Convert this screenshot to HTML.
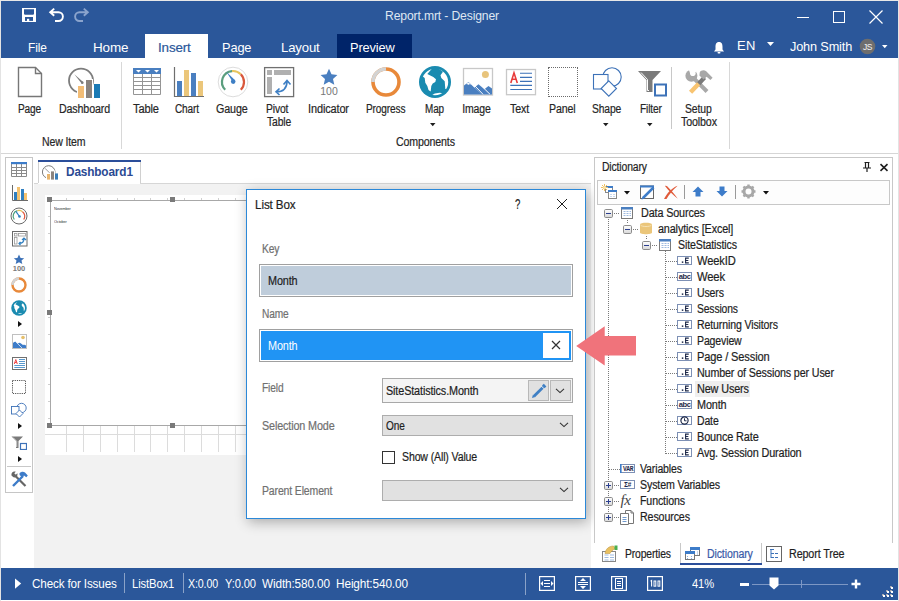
<!DOCTYPE html>
<html><head><meta charset="utf-8"><style>
html,body{margin:0;padding:0;width:899px;height:601px;overflow:hidden;background:#fff;font-family:"Liberation Sans", sans-serif;}
</style></head><body><div style="position:relative;width:899px;height:601px;overflow:hidden">
<div style="position:absolute;left:0px;top:0px;width:899px;height:601px;background:#ffffff"></div>
<div style="position:absolute;left:1px;top:1px;width:897px;height:57px;background:#2b579a"></div>
<div style="position:absolute;left:0px;top:0px;width:1px;height:601px;background:#e3e3e3"></div>
<div style="position:absolute;left:898px;top:0px;width:1px;height:601px;background:#e3e3e3"></div>
<div style="position:absolute;left:0px;top:0px;width:899px;height:1px;background:#e8e8e8"></div>
<svg style="position:absolute;left:22px;top:8px;" width="14" height="14" viewBox="0 0 14 14"><rect x="0" y="0" width="14" height="14" fill="#fff"/><path d="M2 1.2 H12 V6 L11.2 6.8 H2.8 L2 6Z" fill="#2b579a"/><rect x="3" y="9" width="8" height="3.9" fill="#2b579a"/><rect x="5" y="10.8" width="2.2" height="2.2" fill="#fff"/></svg>
<svg style="position:absolute;left:48px;top:7px;" width="17" height="16" viewBox="0 0 17 16"><path d="M6.2 1.6 L2.2 5.2 L6.2 8.8 M2.5 5.2 H10.5 A4.4 4.4 0 0 1 10.5 14 H7" fill="none" stroke="#fff" stroke-width="1.9"/></svg>
<svg style="position:absolute;left:73px;top:7px;" width="17" height="16" viewBox="0 0 17 16"><path d="M10.8 1.6 L14.8 5.2 L10.8 8.8 M14.5 5.2 H6.5 A4.4 4.4 0 0 0 6.5 14 H10" fill="none" stroke="#8ba4cd" stroke-width="1.9"/></svg>
<div style="position:absolute;left:385.00px;top:9.98px;font-size:12.5px;line-height:1;white-space:nowrap;color:#dfe7f3;font-weight:400;letter-spacing:-0.150px;-webkit-text-stroke:0;transform:scaleX(0.9741);transform-origin:1.00px 50%;">Report.mrt - Designer</div>
<div style="position:absolute;left:797px;top:17px;width:12px;height:1px;background:#fff"></div>
<div style="position:absolute;left:833px;top:11px;width:12px;height:12px;border:1px solid #fff;box-sizing:border-box"></div>
<svg style="position:absolute;left:869px;top:10px;" width="14" height="14" viewBox="0 0 14 14"><path d="M0.5 0.5 L13.5 13.5 M13.5 0.5 L0.5 13.5" stroke="#fff" stroke-width="1.2"/></svg>
<div style="position:absolute;left:145px;top:34px;width:63px;height:24px;background:#fff"></div>
<div style="position:absolute;left:337px;top:34px;width:75px;height:24px;background:#002469"></div>
<div style="position:absolute;left:28.00px;top:40.52px;font-size:13.5px;line-height:1;white-space:nowrap;color:#fff;font-weight:400;letter-spacing:-0.150px;-webkit-text-stroke:0;transform:scaleX(0.8841);transform-origin:1.00px 50%;">File</div>
<div style="position:absolute;left:92.50px;top:40.52px;font-size:13.5px;line-height:1;white-space:nowrap;color:#fff;font-weight:400;letter-spacing:-0.150px;-webkit-text-stroke:0;transform:scaleX(0.9984);transform-origin:1.00px 50%;">Home</div>
<div style="position:absolute;left:158.00px;top:40.52px;font-size:13.5px;line-height:1;white-space:nowrap;color:#2b579a;font-weight:400;letter-spacing:-0.150px;-webkit-text-stroke:0.2px #2b579a;transform:scaleX(0.9919);transform-origin:1.00px 50%;">Insert</div>
<div style="position:absolute;left:221.50px;top:40.52px;font-size:13.5px;line-height:1;white-space:nowrap;color:#fff;font-weight:400;letter-spacing:-0.150px;-webkit-text-stroke:0;transform:scaleX(0.9469);transform-origin:1.00px 50%;">Page</div>
<div style="position:absolute;left:281.00px;top:40.52px;font-size:13.5px;line-height:1;white-space:nowrap;color:#fff;font-weight:400;letter-spacing:-0.150px;-webkit-text-stroke:0;transform:scaleX(0.9736);transform-origin:1.00px 50%;">Layout</div>
<div style="position:absolute;left:350.00px;top:40.52px;font-size:13.5px;line-height:1;white-space:nowrap;color:#fff;font-weight:400;letter-spacing:-0.150px;-webkit-text-stroke:0;transform:scaleX(0.9490);transform-origin:1.00px 50%;">Preview</div>
<svg style="position:absolute;left:713px;top:41px;" width="12" height="13" viewBox="0 0 12 13"><path d="M6 1 C3 1 2.5 3.5 2.5 6 L2.5 8.5 L1 10.5 H11 L9.5 8.5 L9.5 6 C9.5 3.5 9 1 6 1Z" fill="#fff"/><rect x="4.5" y="11" width="3" height="1.6" rx="0.8" fill="#fff"/></svg>
<div style="position:absolute;left:737.00px;top:39.45px;font-size:13px;line-height:1;white-space:nowrap;color:#fff;font-weight:400;letter-spacing:0.329px;-webkit-text-stroke:0;">EN</div>
<svg style="position:absolute;left:767px;top:42px;" width="7" height="4" viewBox="0 0 7 4"><path d="M0 0 H7 L3.5 4Z" fill="#fff"/></svg>
<div style="position:absolute;left:790.00px;top:40.45px;font-size:13px;line-height:1;white-space:nowrap;color:#fff;font-weight:400;letter-spacing:-0.150px;-webkit-text-stroke:0;transform:scaleX(0.9771);transform-origin:0.00px 50%;">John Smith</div>
<svg style="position:absolute;left:859px;top:38px;" width="17" height="17" viewBox="0 0 17 17"><circle cx="8.5" cy="8.5" r="7.8" fill="#6e6e6e"/><text x="8.5" y="11.6" font-size="8.5" font-family="Liberation Sans" fill="#f4f4f4" text-anchor="middle" letter-spacing="-0.4">JS</text></svg>
<svg style="position:absolute;left:882px;top:45px;" width="6" height="4" viewBox="0 0 6 4"><path d="M0 0 H5.5 L2.75 3.2Z" fill="#fff"/></svg>
<div style="position:absolute;left:1px;top:153px;width:897px;height:1px;background:#d6d6d6"></div>
<div style="position:absolute;left:121px;top:62px;width:1px;height:87px;background:#d8d8d8"></div>
<div style="position:absolute;left:729px;top:62px;width:1px;height:87px;background:#d8d8d8"></div>
<div style="position:absolute;left:671px;top:67px;width:1px;height:62px;background:#c8c8c8"></div>
<div style="position:absolute;left:17.50px;top:102.80px;font-size:12px;line-height:1;white-space:nowrap;color:#262626;font-weight:400;letter-spacing:-0.150px;-webkit-text-stroke:0.2px #262626;transform:scaleX(0.8422);transform-origin:0.00px 50%;">Page</div>
<div style="position:absolute;left:58.50px;top:102.80px;font-size:12px;line-height:1;white-space:nowrap;color:#262626;font-weight:400;letter-spacing:-0.150px;-webkit-text-stroke:0.2px #262626;transform:scaleX(0.8886);transform-origin:0.00px 50%;">Dashboard</div>
<div style="position:absolute;left:41.50px;top:135.80px;font-size:12px;line-height:1;white-space:nowrap;color:#262626;font-weight:400;letter-spacing:-0.150px;-webkit-text-stroke:0.2px #262626;transform:scaleX(0.8765);transform-origin:0.00px 50%;">New Item</div>
<div style="position:absolute;left:133.40px;top:102.80px;font-size:12px;line-height:1;white-space:nowrap;color:#262626;font-weight:400;letter-spacing:-0.150px;-webkit-text-stroke:0.2px #262626;transform:scaleX(0.9221);transform-origin:0.00px 50%;">Table</div>
<div style="position:absolute;left:175.40px;top:102.80px;font-size:12px;line-height:1;white-space:nowrap;color:#262626;font-weight:400;letter-spacing:-0.150px;-webkit-text-stroke:0.2px #262626;transform:scaleX(0.8365);transform-origin:0.00px 50%;">Chart</div>
<div style="position:absolute;left:216.00px;top:102.80px;font-size:12px;line-height:1;white-space:nowrap;color:#262626;font-weight:400;letter-spacing:-0.150px;-webkit-text-stroke:0.2px #262626;transform:scaleX(0.8950);transform-origin:0.00px 50%;">Gauge</div>
<div style="position:absolute;left:266.00px;top:102.80px;font-size:12px;line-height:1;white-space:nowrap;color:#262626;font-weight:400;letter-spacing:-0.150px;-webkit-text-stroke:0.2px #262626;transform:scaleX(0.8600);transform-origin:0.00px 50%;">Pivot</div>
<div style="position:absolute;left:266.60px;top:115.80px;font-size:12px;line-height:1;white-space:nowrap;color:#262626;font-weight:400;letter-spacing:-0.150px;-webkit-text-stroke:0.2px #262626;transform:scaleX(0.8587);transform-origin:0.00px 50%;">Table</div>
<div style="position:absolute;left:307.50px;top:102.80px;font-size:12px;line-height:1;white-space:nowrap;color:#262626;font-weight:400;letter-spacing:-0.150px;-webkit-text-stroke:0.2px #262626;transform:scaleX(0.9126);transform-origin:1.00px 50%;">Indicator</div>
<div style="position:absolute;left:365.50px;top:102.80px;font-size:12px;line-height:1;white-space:nowrap;color:#262626;font-weight:400;letter-spacing:-0.150px;-webkit-text-stroke:0.2px #262626;transform:scaleX(0.8410);transform-origin:0.00px 50%;">Progress</div>
<div style="position:absolute;left:424.50px;top:102.80px;font-size:12px;line-height:1;white-space:nowrap;color:#262626;font-weight:400;letter-spacing:-0.150px;-webkit-text-stroke:0.2px #262626;transform:scaleX(0.8258);transform-origin:0.00px 50%;">Map</div>
<div style="position:absolute;left:462.00px;top:102.80px;font-size:12px;line-height:1;white-space:nowrap;color:#262626;font-weight:400;letter-spacing:-0.150px;-webkit-text-stroke:0.2px #262626;transform:scaleX(0.8729);transform-origin:1.00px 50%;">Image</div>
<div style="position:absolute;left:510.30px;top:102.80px;font-size:12px;line-height:1;white-space:nowrap;color:#262626;font-weight:400;letter-spacing:-0.150px;-webkit-text-stroke:0.2px #262626;transform:scaleX(0.8864);transform-origin:0.00px 50%;">Text</div>
<div style="position:absolute;left:549.20px;top:102.80px;font-size:12px;line-height:1;white-space:nowrap;color:#262626;font-weight:400;letter-spacing:-0.150px;-webkit-text-stroke:0.2px #262626;transform:scaleX(0.8836);transform-origin:0.00px 50%;">Panel</div>
<div style="position:absolute;left:592.40px;top:102.80px;font-size:12px;line-height:1;white-space:nowrap;color:#262626;font-weight:400;letter-spacing:-0.150px;-webkit-text-stroke:0.2px #262626;transform:scaleX(0.8598);transform-origin:0.00px 50%;">Shape</div>
<div style="position:absolute;left:640.00px;top:102.80px;font-size:12px;line-height:1;white-space:nowrap;color:#262626;font-weight:400;letter-spacing:-0.150px;-webkit-text-stroke:0.2px #262626;transform:scaleX(0.8488);transform-origin:0.00px 50%;">Filter</div>
<div style="position:absolute;left:685.00px;top:102.80px;font-size:12px;line-height:1;white-space:nowrap;color:#262626;font-weight:400;letter-spacing:-0.150px;-webkit-text-stroke:0.2px #262626;transform:scaleX(0.8686);transform-origin:0.00px 50%;">Setup</div>
<div style="position:absolute;left:681.00px;top:115.80px;font-size:12px;line-height:1;white-space:nowrap;color:#262626;font-weight:400;letter-spacing:-0.150px;-webkit-text-stroke:0.2px #262626;transform:scaleX(0.8897);transform-origin:0.00px 50%;">Toolbox</div>
<div style="position:absolute;left:396.00px;top:135.80px;font-size:12px;line-height:1;white-space:nowrap;color:#262626;font-weight:400;letter-spacing:-0.150px;-webkit-text-stroke:0.2px #262626;transform:scaleX(0.8847);transform-origin:0.00px 50%;">Components</div>
<svg style="position:absolute;left:430px;top:123px;" width="6" height="4" viewBox="0 0 6 4"><path d="M0 0 H5.5 L2.75 3.2Z" fill="#1e1e1e"/></svg>
<svg style="position:absolute;left:603px;top:123px;" width="6" height="4" viewBox="0 0 6 4"><path d="M0 0 H5.5 L2.75 3.2Z" fill="#1e1e1e"/></svg>
<svg style="position:absolute;left:647px;top:123px;" width="6" height="4" viewBox="0 0 6 4"><path d="M0 0 H5.5 L2.75 3.2Z" fill="#1e1e1e"/></svg>
<svg style="position:absolute;left:17px;top:66px;" width="26" height="32" viewBox="0 0 26 32"><path d="M1.5 1.5 H18.5 L24.5 7.5 V30.5 H1.5 Z" fill="#fff" stroke="#777" stroke-width="1.4"/><path d="M18.5 1.5 V7.5 H24.5" fill="none" stroke="#777" stroke-width="1.4"/></svg>
<svg style="position:absolute;left:66px;top:66px;" width="36" height="34" viewBox="0 0 36 34"><circle cx="15" cy="14.6" r="12" fill="none" stroke="#7d7d7d" stroke-width="1.8"/><path d="M8.3 8.3 L17.2 16 L15.6 17.6Z" fill="#7d7d7d"/><circle cx="16.3" cy="16.7" r="1.3" fill="#7d7d7d"/><rect x="11" y="19" width="8" height="14" fill="#fff"/><rect x="12" y="20" width="6" height="12" fill="#f3bd76"/><rect x="19" y="13" width="8" height="20" fill="#fff"/><rect x="20" y="14" width="6" height="18" fill="#8a837e"/><rect x="28" y="18" width="6" height="14" fill="#1b7ab5"/></svg>
<svg style="position:absolute;left:132px;top:67px;" width="30" height="29" viewBox="0 0 30 29"><rect x="1" y="1" width="28" height="6" fill="#4a7fc0"/><path d="M4 3 H9 L6.5 5.5Z M13 3 H18 L15.5 5.5Z M22 3 H27 L24.5 5.5Z" fill="#fff"/><path d="M1.5 7 V27.5 H28.5 V7 M1.5 10.5 H28.5 M1.5 14.5 H28.5 M1.5 18.5 H28.5 M1.5 22.5 H28.5 M10.5 7 V27.5 M19.5 7 V27.5" fill="none" stroke="#959595" stroke-width="1"/></svg>
<svg style="position:absolute;left:173px;top:66px;" width="32" height="32" viewBox="0 0 32 32"><path d="M1.5 1 V30.5 H31" fill="none" stroke="#6e6e6e" stroke-width="1.2"/><rect x="4" y="15" width="5" height="15" fill="#4a7fc0"/><rect x="11" y="4" width="5" height="26" fill="#ebc67a"/><rect x="18" y="7" width="5" height="23" fill="#4a7fc0"/><rect x="25" y="15" width="5" height="15" fill="#ebc67a"/></svg>
<svg style="position:absolute;left:217px;top:66px;" width="32" height="32" viewBox="0 0 32 32"><circle cx="16" cy="16" r="14.8" fill="none" stroke="#d8d8d8" stroke-width="0.9"/><path d="M8.22 23.78 A11 11 0 0 1 15.04 5.04" fill="none" stroke="#5b9e7e" stroke-width="2.2"/><path d="M15.04 5.04 A11 11 0 0 1 23.78 8.22" fill="none" stroke="#e8c55e" stroke-width="2.2"/><path d="M23.78 8.22 A11 11 0 0 1 23.78 23.78" fill="none" stroke="#d9583c" stroke-width="2.2"/><path d="M9.3 5.8 L15 14.8 L17.3 13.4Z" fill="#3e7fc4"/><circle cx="16.2" cy="15.6" r="2.3" fill="#3e7fc4"/></svg>
<svg style="position:absolute;left:263px;top:66px;" width="32" height="32" viewBox="0 0 32 32"><rect x="1.6" y="1.6" width="29" height="29" fill="#fff" stroke="#707070" stroke-width="1.3"/><rect x="4" y="4" width="5" height="5" fill="#b0b0b0"/><rect x="11" y="4" width="17" height="5" fill="#b0b0b0"/><rect x="4" y="11" width="5" height="17" fill="#b0b0b0"/><path d="M13 26 C19 26 24 24 24 15 M20.5 18.5 L24 14.5 L27.5 18.5 M16.5 22.5 L13 25.8 L16.5 29" fill="none" stroke="#3e7fc4" stroke-width="1.6"/></svg>
<svg style="position:absolute;left:318px;top:68px;" width="22" height="30" viewBox="0 0 22 30"><path d="M11 0.8 L13.5 6.3 L19.4 6.9 L15 10.9 L16.3 16.7 L11 13.7 L5.7 16.7 L7 10.9 L2.6 6.9 L8.5 6.3Z" fill="#4a7fc0"/><text x="11" y="27" font-size="10.5" font-family="Liberation Sans" fill="#777" text-anchor="middle">100</text></svg>
<svg style="position:absolute;left:370px;top:66px;" width="32" height="32" viewBox="0 0 32 32"><circle cx="16" cy="16" r="13" fill="none" stroke="#e8893a" stroke-width="3.6"/><path d="M3 16 A13 13 0 0 1 16 3" fill="none" stroke="#d3d3d3" stroke-width="3.6"/></svg>
<svg style="position:absolute;left:418px;top:65px;" width="34" height="34" viewBox="0 0 34 34"><defs><clipPath id="gc"><circle cx="17" cy="17" r="13.2"/></clipPath></defs><circle cx="17" cy="17" r="16" fill="#1a8bb0"/><g clip-path="url(#gc)" fill="#fff"><path d="M0 0 L15 0 L14.5 3 L9.3 9 L15.3 12 L18 14.3 L17.3 17 L14.7 18.5 L13.3 21 L12.7 26.5 L10.5 25 L9.3 21 L7.3 17.7 L6.7 13 L4.5 11.3 L0 11 Z"/><path d="M20.5 3.5 L25 6.8 L22.5 10.3 L23.3 13 L26.7 16.3 L27.3 24 L34 24 L34 0 L20.5 0 Z"/><path d="M12.5 31 Q18 26.8 25 28.2 L25 34 L12.5 34 Z"/></g></svg>
<svg style="position:absolute;left:462px;top:67px;" width="32" height="29" viewBox="0 0 32 29"><rect x="1.5" y="1.5" width="29" height="26.5" fill="#fff" stroke="#c8c8c8" stroke-width="1.3"/><circle cx="23.4" cy="7.5" r="3.5" fill="#e8c47c"/><path d="M2 27.5 V18.5 L6.5 15 L19.5 27.5Z" fill="#4a7fc0"/><path d="M12.5 20.5 L16.5 17.2 L28.5 27.5 H19Z" fill="#4a7fc0"/><path d="M22 22.5 L26.5 19 L30 21.5 V27.5 H27Z" fill="#4a7fc0"/><path d="M12.8 18.8 L21 27.3 M21.8 21.2 L28 27.3" stroke="#fff" stroke-width="1"/><path d="M4 17 L6.5 15.5 L9 17.5 L7.2 17.2 L6.3 18 L5.5 17.2Z" fill="#fff"/></svg>
<svg style="position:absolute;left:505px;top:68px;" width="32" height="28" viewBox="0 0 32 28"><rect x="1.5" y="1.5" width="29" height="25.2" fill="#fff" stroke="#c8c8c8" stroke-width="1.3"/><path d="M5.8 15 L9 4.8 L12.3 15 M6.8 11.2 H11.3" fill="none" stroke="#e83a3a" stroke-width="1.6"/><path d="M15 5.3 H27 M15 9.4 H27 M15 13.4 H27 M5.3 17.4 H27 M5.3 21.5 H27" stroke="#3d72b8" stroke-width="1.1"/></svg>
<div style="position:absolute;left:548px;top:67px;width:30px;height:30px;border:1px dotted #6a6a6a;box-sizing:border-box"></div>
<svg style="position:absolute;left:590px;top:65px;" width="34" height="34" viewBox="0 0 34 34"><circle cx="22" cy="12" r="9.2" fill="none" stroke="#3d72b8" stroke-width="1.1"/><rect x="3.5" y="9.5" width="14.5" height="14.5" fill="#fff" stroke="#3d72b8" stroke-width="1.1"/><path d="M18.8 15.8 L26.5 23.5 L18.8 31.2 L11.1 23.5Z" fill="#fff" stroke="#3d72b8" stroke-width="1.1"/></svg>
<svg style="position:absolute;left:637px;top:69px;" width="31" height="28" viewBox="0 0 31 28"><path d="M1 2 H24 L15.5 11 V23 H9.5 V11Z" fill="#7a7a7a"/><path d="M4 3.5 L10.5 10.5 V21.5 H12" fill="none" stroke="#fff" stroke-width="1"/><rect x="18" y="15.5" width="11" height="11" fill="#fff" stroke="#3d72b8" stroke-width="2"/></svg>
<svg style="position:absolute;left:682px;top:68px;" width="34" height="28" viewBox="0 0 34 28"><path d="M9.4 7.8 L25 23.5" stroke="#a8a8a8" stroke-width="4"/><circle cx="9.4" cy="7.8" r="6" fill="#a8a8a8"/><circle cx="10.8" cy="5.2" r="2.8" fill="#fff"/><path d="M8.2 -1 H14.5 V5 H8.2Z" fill="#fff" transform="rotate(-20 10.8 5)"/><path d="M22.5 9.5 L16.5 16" stroke="#7a7a7a" stroke-width="4.2"/><path d="M16.7 15.8 L8.6 24.3" stroke="#f8c471" stroke-width="4.4"/><path d="M17.8 4.2 C19 2.2 22 1.6 24.2 3.2 L30.6 9.8 L28.4 12 L24.6 8.8 L21.6 11.6 L17.4 7.6 Z" fill="#a8a8a8"/></svg>
<div style="position:absolute;left:1px;top:154px;width:33px;height:414px;background:#ffffff"></div>
<div style="position:absolute;left:34px;top:154px;width:557px;height:414px;background:#f2f2f2"></div>
<div style="position:absolute;left:34px;top:154px;width:557px;height:29px;background:#fff"></div>
<div style="position:absolute;left:591px;top:154px;width:307px;height:414px;background:#fff"></div>
<div style="position:absolute;left:5px;top:157px;width:28px;height:336px;border:1px solid #c6c6c6;box-sizing:border-box;background:#fff"></div>
<div style="position:absolute;left:38px;top:160px;width:103px;height:24px;background:#fff;border:1px solid #d0d0d0;border-bottom:none;box-sizing:border-box"></div>
<div style="position:absolute;left:38px;top:160px;width:103px;height:2px;background:#2b4e9a"></div>
<div style="position:absolute;left:34px;top:183px;width:557px;height:1px;background:#d6d6d6"></div>
<div style="position:absolute;left:38px;top:183px;width:102px;height:1px;background:#fff"></div>
<div style="position:absolute;left:66.00px;top:165.88px;font-size:12.5px;line-height:1;white-space:nowrap;color:#2b4a93;font-weight:700;letter-spacing:-0.150px;-webkit-text-stroke:0.2px #2b4a93;transform:scaleX(0.9445);transform-origin:0.00px 50%;-webkit-text-stroke:0">Dashboard1</div>
<svg style="position:absolute;left:42px;top:164px;" width="18" height="17" viewBox="0 0 18 17"><circle cx="6.7" cy="8" r="6.3" fill="none" stroke="#7d7d7d" stroke-width="1"/><path d="M3 4.3 L7.5 8.8" stroke="#7d7d7d" stroke-width="0.8"/><rect x="4" y="9" width="5" height="7" fill="#fff"/><rect x="5" y="10" width="3" height="5.6" fill="#e9b66e"/><rect x="8" y="6.4" width="5" height="10" fill="#fff"/><rect x="9" y="7.4" width="3" height="8.2" fill="#8a837e"/><rect x="13" y="9.4" width="3" height="6.2" fill="#3a7db8"/></svg>
<div style="position:absolute;left:45px;top:195px;width:535px;height:260px;background:#fff"></div>
<div style="position:absolute;left:50px;top:200px;width:530px;height:1px;background:#a8a8a8"></div>
<div style="position:absolute;left:50px;top:200px;width:1px;height:226px;background:#a8a8a8"></div>
<div style="position:absolute;left:50px;top:425px;width:530px;height:1px;background:#a8a8a8"></div>
<div style="position:absolute;left:47px;top:197px;width:5px;height:5px;background:#7a7a7a"></div>
<div style="position:absolute;left:170px;top:197px;width:5px;height:5px;background:#7a7a7a"></div>
<div style="position:absolute;left:47px;top:310px;width:5px;height:5px;background:#7a7a7a"></div>
<div style="position:absolute;left:47px;top:423px;width:5px;height:5px;background:#7a7a7a"></div>
<div style="position:absolute;left:170px;top:423px;width:5px;height:5px;background:#7a7a7a"></div>
<div style="position:absolute;left:45px;top:434px;width:535px;height:1px;background:#dcdcdc"></div>
<div style="position:absolute;left:66px;top:426px;width:1px;height:26px;background:#dcdcdc"></div>
<div style="position:absolute;left:83px;top:426px;width:1px;height:26px;background:#dcdcdc"></div>
<div style="position:absolute;left:100px;top:426px;width:1px;height:26px;background:#dcdcdc"></div>
<div style="position:absolute;left:117px;top:426px;width:1px;height:26px;background:#dcdcdc"></div>
<div style="position:absolute;left:134px;top:426px;width:1px;height:26px;background:#dcdcdc"></div>
<div style="position:absolute;left:150px;top:426px;width:1px;height:26px;background:#dcdcdc"></div>
<div style="position:absolute;left:167px;top:426px;width:1px;height:26px;background:#dcdcdc"></div>
<div style="position:absolute;left:184px;top:426px;width:1px;height:26px;background:#dcdcdc"></div>
<div style="position:absolute;left:201px;top:426px;width:1px;height:26px;background:#dcdcdc"></div>
<div style="position:absolute;left:218px;top:426px;width:1px;height:26px;background:#dcdcdc"></div>
<div style="position:absolute;left:235px;top:426px;width:1px;height:26px;background:#dcdcdc"></div>
<div style="position:absolute;left:251px;top:426px;width:1px;height:26px;background:#dcdcdc"></div>
<div style="position:absolute;left:268px;top:426px;width:1px;height:26px;background:#dcdcdc"></div>
<div style="position:absolute;left:285px;top:426px;width:1px;height:26px;background:#dcdcdc"></div>
<div style="position:absolute;left:54.00px;top:207.10px;font-size:4px;line-height:1;white-space:nowrap;color:#333;font-weight:400;letter-spacing:-0.150px;-webkit-text-stroke:0.2px #333;transform:scaleX(0.9685);transform-origin:0.00px 50%;-webkit-text-stroke:0">November</div>
<div style="position:absolute;left:54.00px;top:220.10px;font-size:4px;line-height:1;white-space:nowrap;color:#333;font-weight:400;letter-spacing:-0.150px;-webkit-text-stroke:0.2px #333;transform:scaleX(0.9645);transform-origin:0.00px 50%;-webkit-text-stroke:0">October</div>
<div style="position:absolute;left:66px;top:198px;width:1px;height:2px;background:#cfcfcf"></div>
<div style="position:absolute;left:83px;top:198px;width:1px;height:2px;background:#cfcfcf"></div>
<div style="position:absolute;left:100px;top:198px;width:1px;height:2px;background:#cfcfcf"></div>
<div style="position:absolute;left:117px;top:198px;width:1px;height:2px;background:#cfcfcf"></div>
<div style="position:absolute;left:134px;top:198px;width:1px;height:2px;background:#cfcfcf"></div>
<div style="position:absolute;left:150px;top:198px;width:1px;height:2px;background:#cfcfcf"></div>
<div style="position:absolute;left:167px;top:198px;width:1px;height:2px;background:#cfcfcf"></div>
<div style="position:absolute;left:184px;top:198px;width:1px;height:2px;background:#cfcfcf"></div>
<div style="position:absolute;left:201px;top:198px;width:1px;height:2px;background:#cfcfcf"></div>
<div style="position:absolute;left:218px;top:198px;width:1px;height:2px;background:#cfcfcf"></div>
<div style="position:absolute;left:235px;top:198px;width:1px;height:2px;background:#cfcfcf"></div>
<div style="position:absolute;left:251px;top:198px;width:1px;height:2px;background:#cfcfcf"></div>
<div style="position:absolute;left:268px;top:198px;width:1px;height:2px;background:#cfcfcf"></div>
<div style="position:absolute;left:285px;top:198px;width:1px;height:2px;background:#cfcfcf"></div>
<div style="position:absolute;left:302px;top:198px;width:1px;height:2px;background:#cfcfcf"></div>
<div style="position:absolute;left:319px;top:198px;width:1px;height:2px;background:#cfcfcf"></div>
<div style="position:absolute;left:336px;top:198px;width:1px;height:2px;background:#cfcfcf"></div>
<div style="position:absolute;left:352px;top:198px;width:1px;height:2px;background:#cfcfcf"></div>
<div style="position:absolute;left:369px;top:198px;width:1px;height:2px;background:#cfcfcf"></div>
<div style="position:absolute;left:386px;top:198px;width:1px;height:2px;background:#cfcfcf"></div>
<div style="position:absolute;left:403px;top:198px;width:1px;height:2px;background:#cfcfcf"></div>
<div style="position:absolute;left:48px;top:216px;width:2px;height:1px;background:#cfcfcf"></div>
<div style="position:absolute;left:48px;top:233px;width:2px;height:1px;background:#cfcfcf"></div>
<div style="position:absolute;left:48px;top:250px;width:2px;height:1px;background:#cfcfcf"></div>
<div style="position:absolute;left:48px;top:267px;width:2px;height:1px;background:#cfcfcf"></div>
<div style="position:absolute;left:48px;top:283px;width:2px;height:1px;background:#cfcfcf"></div>
<div style="position:absolute;left:48px;top:300px;width:2px;height:1px;background:#cfcfcf"></div>
<div style="position:absolute;left:48px;top:317px;width:2px;height:1px;background:#cfcfcf"></div>
<div style="position:absolute;left:48px;top:334px;width:2px;height:1px;background:#cfcfcf"></div>
<div style="position:absolute;left:48px;top:351px;width:2px;height:1px;background:#cfcfcf"></div>
<div style="position:absolute;left:48px;top:368px;width:2px;height:1px;background:#cfcfcf"></div>
<div style="position:absolute;left:48px;top:384px;width:2px;height:1px;background:#cfcfcf"></div>
<div style="position:absolute;left:48px;top:401px;width:2px;height:1px;background:#cfcfcf"></div>
<div style="position:absolute;left:48px;top:418px;width:2px;height:1px;background:#cfcfcf"></div>
<div style="position:absolute;left:246px;top:189px;width:340px;height:330px;background:#fff;border:1px solid #2b88d8;box-sizing:border-box;box-shadow:2px 3px 12px rgba(0,0,0,0.3)"></div>
<div style="position:absolute;left:254.50px;top:197.95px;font-size:13px;line-height:1;white-space:nowrap;color:#1e1e1e;font-weight:400;letter-spacing:-0.150px;-webkit-text-stroke:0.2px #1e1e1e;transform:scaleX(0.8950);transform-origin:1.00px 50%;">List Box</div>
<div style="position:absolute;left:514.50px;top:197.10px;font-size:14px;line-height:1;white-space:nowrap;color:#1e1e1e;font-weight:400;letter-spacing:0.000px;-webkit-text-stroke:0.2px #1e1e1e;transform:scaleX(0.6875);transform-origin:0.00px 50%;">?</div>
<svg style="position:absolute;left:556px;top:198px;" width="12" height="12" viewBox="0 0 12 12"><path d="M1 1 L11 11 M11 1 L1 11" stroke="#1e1e1e" stroke-width="1"/></svg>
<div style="position:absolute;left:262.20px;top:242.80px;font-size:12px;line-height:1;white-space:nowrap;color:#707070;font-weight:400;letter-spacing:-0.150px;-webkit-text-stroke:0.2px #707070;transform:scaleX(0.8588);transform-origin:0.00px 50%;">Key</div>
<div style="position:absolute;left:259px;top:264px;width:314px;height:33px;border:1px solid #a0a0a0;box-sizing:border-box;background:#fff"></div>
<div style="position:absolute;left:261px;top:266px;width:310px;height:29px;background:#bfcddb"></div>
<div style="position:absolute;left:268.00px;top:274.80px;font-size:12px;line-height:1;white-space:nowrap;color:#1e1e1e;font-weight:400;letter-spacing:-0.150px;-webkit-text-stroke:0.2px #1e1e1e;transform:scaleX(0.9041);transform-origin:0.00px 50%;">Month</div>
<div style="position:absolute;left:262.00px;top:307.80px;font-size:12px;line-height:1;white-space:nowrap;color:#707070;font-weight:400;letter-spacing:-0.150px;-webkit-text-stroke:0.2px #707070;transform:scaleX(0.8468);transform-origin:0.00px 50%;">Name</div>
<div style="position:absolute;left:259px;top:329px;width:314px;height:33px;border:1px solid #a0a0a0;box-sizing:border-box;background:#fff"></div>
<div style="position:absolute;left:261px;top:331px;width:310px;height:29px;background:#2094f4"></div>
<div style="position:absolute;left:543px;top:333px;width:26px;height:25px;background:#fff"></div>
<svg style="position:absolute;left:551px;top:340px;" width="10" height="10" viewBox="0 0 10 10"><path d="M1 1 L9 9 M9 1 L1 9" stroke="#333" stroke-width="1.2"/></svg>
<div style="position:absolute;left:268.00px;top:339.80px;font-size:12px;line-height:1;white-space:nowrap;color:#fff;font-weight:400;letter-spacing:-0.150px;-webkit-text-stroke:0;transform:scaleX(0.9041);transform-origin:0.00px 50%;">Month</div>
<div style="position:absolute;left:262.00px;top:381.80px;font-size:12px;line-height:1;white-space:nowrap;color:#707070;font-weight:400;letter-spacing:-0.150px;-webkit-text-stroke:0.2px #707070;transform:scaleX(0.8490);transform-origin:0.00px 50%;">Field</div>
<div style="position:absolute;left:382px;top:378px;width:191px;height:25px;border:1px solid #a8a8a8;box-sizing:border-box;background:#f4f4f4"></div>
<div style="position:absolute;left:386.00px;top:384.80px;font-size:12px;line-height:1;white-space:nowrap;color:#1e1e1e;font-weight:400;letter-spacing:-0.150px;-webkit-text-stroke:0.2px #1e1e1e;transform:scaleX(0.9033);transform-origin:0.00px 50%;">SiteStatistics.Month</div>
<div style="position:absolute;left:528px;top:380px;width:21px;height:21px;border:1px solid #b8b8b8;box-sizing:border-box;background:#e1e1e1"></div>
<svg style="position:absolute;left:531px;top:383px;" width="16" height="16" viewBox="0 0 16 16"><path d="M3 13.2 L12.3 3.9" stroke="#3e7fc4" stroke-width="2.8"/><path d="M11 2.6 L12.8 0.8 L15.4 3.4 L13.6 5.2Z" fill="#3e7fc4"/><path d="M10.4 3.2 L13 5.8" stroke="#fff" stroke-width="0.8"/><path d="M1 15 L1.9 11.7 L4.3 14.1Z" fill="#3e7fc4"/></svg>
<div style="position:absolute;left:550px;top:380px;width:21px;height:21px;border:1px solid #b8b8b8;box-sizing:border-box;background:#e1e1e1"></div>
<svg style="position:absolute;left:555px;top:388px;" width="11" height="6" viewBox="0 0 11 6"><path d="M1 0.8 L5 4.6 L9 0.8" fill="none" stroke="#333" stroke-width="1.1"/></svg>
<div style="position:absolute;left:262.00px;top:419.80px;font-size:12px;line-height:1;white-space:nowrap;color:#707070;font-weight:400;letter-spacing:-0.150px;-webkit-text-stroke:0.2px #707070;transform:scaleX(0.9002);transform-origin:0.00px 50%;">Selection Mode</div>
<div style="position:absolute;left:382px;top:415px;width:191px;height:21px;border:1px solid #adadad;box-sizing:border-box;background:#e1e1e1"></div>
<div style="position:absolute;left:386.00px;top:419.80px;font-size:12px;line-height:1;white-space:nowrap;color:#1e1e1e;font-weight:400;letter-spacing:-0.150px;-webkit-text-stroke:0.2px #1e1e1e;transform:scaleX(0.8367);transform-origin:0.00px 50%;">One</div>
<svg style="position:absolute;left:559px;top:422px;" width="11" height="6" viewBox="0 0 11 6"><path d="M1 0.8 L5 4.6 L9 0.8" fill="none" stroke="#333" stroke-width="1.1"/></svg>
<div style="position:absolute;left:382px;top:451px;width:13px;height:13px;border:1px solid #333;box-sizing:border-box;background:#fff"></div>
<div style="position:absolute;left:401.50px;top:450.80px;font-size:12px;line-height:1;white-space:nowrap;color:#1e1e1e;font-weight:400;letter-spacing:-0.150px;-webkit-text-stroke:0.2px #1e1e1e;transform:scaleX(0.8790);transform-origin:0.00px 50%;">Show (All) Value</div>
<div style="position:absolute;left:262.00px;top:484.80px;font-size:12px;line-height:1;white-space:nowrap;color:#707070;font-weight:400;letter-spacing:-0.150px;-webkit-text-stroke:0.2px #707070;transform:scaleX(0.8719);transform-origin:0.00px 50%;">Parent Element</div>
<div style="position:absolute;left:382px;top:480px;width:191px;height:21px;border:1px solid #adadad;box-sizing:border-box;background:#e1e1e1"></div>
<svg style="position:absolute;left:559px;top:487px;" width="11" height="6" viewBox="0 0 11 6"><path d="M1 0.8 L5 4.6 L9 0.8" fill="none" stroke="#333" stroke-width="1.1"/></svg>
<div style="position:absolute;left:594px;top:157px;width:299px;height:386px;border:1px solid #c8c8c8;border-bottom:none;box-sizing:border-box;background:#fff"></div>
<div style="position:absolute;left:601.60px;top:160.80px;font-size:12px;line-height:1;white-space:nowrap;color:#1e1e1e;font-weight:400;letter-spacing:-0.150px;-webkit-text-stroke:0.2px #1e1e1e;transform:scaleX(0.8654);transform-origin:0.00px 50%;">Dictionary</div>
<svg style="position:absolute;left:862px;top:162px;" width="10" height="10" viewBox="0 0 10 10"><path d="M2.5 0.5 H7.5 M3.5 0.5 V6 M6.5 0.5 V6 M1 6 H9 M5 6 V10" fill="none" stroke="#1e1e1e" stroke-width="1.2"/></svg>
<svg style="position:absolute;left:879px;top:163px;" width="10" height="9" viewBox="0 0 10 9"><path d="M1.5 1.2 L8.5 7.8 M8.5 1.2 L1.5 7.8" stroke="#1e1e1e" stroke-width="1.6"/></svg>
<div style="position:absolute;left:597px;top:180px;width:293px;height:25px;border:1px solid #c8c8c8;box-sizing:border-box;background:#fdfdfd"></div>
<div style="position:absolute;left:1px;top:568px;width:897px;height:32px;background:#2b579a"></div>
<svg style="position:absolute;left:15px;top:578px;" width="7" height="12" viewBox="0 0 7 12"><path d="M0 0.5 L6.2 5.6 L0 10.8Z" fill="#fff"/></svg>
<div style="position:absolute;left:31.50px;top:578.38px;font-size:12.5px;line-height:1;white-space:nowrap;color:#fff;font-weight:400;letter-spacing:-0.150px;-webkit-text-stroke:0;transform:scaleX(0.9339);transform-origin:0.00px 50%;">Check for Issues</div>
<div style="position:absolute;left:124px;top:573px;width:1px;height:20px;background:#8aa2c8"></div>
<div style="position:absolute;left:131.70px;top:578.38px;font-size:12.5px;line-height:1;white-space:nowrap;color:#fff;font-weight:400;letter-spacing:-0.150px;-webkit-text-stroke:0;transform:scaleX(0.8990);transform-origin:1.00px 50%;">ListBox1</div>
<div style="position:absolute;left:183px;top:573px;width:1px;height:20px;background:#8aa2c8"></div>
<div style="position:absolute;left:188.20px;top:578.38px;font-size:12.5px;line-height:1;white-space:nowrap;color:#fff;font-weight:400;letter-spacing:-0.150px;-webkit-text-stroke:0;transform:scaleX(0.8522);transform-origin:0.00px 50%;">X:0.00</div>
<div style="position:absolute;left:225.00px;top:578.38px;font-size:12.5px;line-height:1;white-space:nowrap;color:#fff;font-weight:400;letter-spacing:-0.150px;-webkit-text-stroke:0;transform:scaleX(0.8922);transform-origin:0.00px 50%;">Y:0.00</div>
<div style="position:absolute;left:262.00px;top:578.38px;font-size:12.5px;line-height:1;white-space:nowrap;color:#fff;font-weight:400;letter-spacing:-0.150px;-webkit-text-stroke:0;transform:scaleX(0.9437);transform-origin:0.00px 50%;">Width:580.00</div>
<div style="position:absolute;left:336.00px;top:578.38px;font-size:12.5px;line-height:1;white-space:nowrap;color:#fff;font-weight:400;letter-spacing:-0.150px;-webkit-text-stroke:0;transform:scaleX(0.9456);transform-origin:1.00px 50%;">Height:540.00</div>
<div style="position:absolute;left:525px;top:573px;width:1px;height:22px;background:#8aa2c8"></div>
<div style="position:absolute;left:692.00px;top:578.38px;font-size:12.5px;line-height:1;white-space:nowrap;color:#fff;font-weight:400;letter-spacing:-0.150px;-webkit-text-stroke:0;transform:scaleX(0.8942);transform-origin:0.00px 50%;">41%</div>
<svg style="position:absolute;left:11px;top:162px;" width="16" height="15" viewBox="0 0 16 15"><rect x="0" y="0" width="16" height="2.2" fill="#3d7cc9"/><path d="M0.5 2 V14.5 H15.5 V2 M0.5 5.5 H15.5 M0.5 8.5 H15.5 M0.5 11.5 H15.5 M5.5 2 V14.5 M10.5 2 V14.5" fill="none" stroke="#8a8a8a" stroke-width="1"/></svg>
<svg style="position:absolute;left:11px;top:185px;" width="17" height="16" viewBox="0 0 17 16"><path d="M1.5 0 V15.5 H17" fill="none" stroke="#6a6a6a" stroke-width="1"/><rect x="3" y="7" width="3" height="8" fill="#2f7fc1"/><rect x="6" y="2" width="3" height="13" fill="#f4c26f"/><rect x="10" y="4" width="3" height="11" fill="#2f7fc1"/><rect x="13" y="8" width="3" height="7" fill="#f4c26f"/></svg>
<svg style="position:absolute;left:10px;top:207px;" width="18" height="18" viewBox="0 0 18 18"><circle cx="9" cy="9" r="8" fill="none" stroke="#6a6a6a" stroke-width="1"/><path d="M4.3 12.5 A5.5 5.5 0 0 1 7.5 3.7" fill="none" stroke="#4aa07a" stroke-width="1.2"/><path d="M7.5 3.7 A5.5 5.5 0 0 1 12.5 4.8" fill="none" stroke="#e6c25c" stroke-width="1.2"/><path d="M12.5 4.8 A5.5 5.5 0 0 1 13.7 12.5" fill="none" stroke="#e0553b" stroke-width="1.2"/><path d="M6 4.5 L9.5 9.5" stroke="#2f7fc1" stroke-width="1.3"/><circle cx="9.5" cy="9.5" r="1.3" fill="#2f7fc1"/></svg>
<svg style="position:absolute;left:11px;top:230px;" width="17" height="17" viewBox="0 0 17 17"><rect x="1.5" y="1.5" width="14.5" height="14.5" fill="#fff" stroke="#6a6a6a" stroke-width="1"/><rect x="3.5" y="3.5" width="2.5" height="2.5" fill="none" stroke="#9a9a9a" stroke-width="0.8"/><rect x="7.5" y="3.5" width="7" height="2.5" fill="none" stroke="#9a9a9a" stroke-width="0.8"/><rect x="3.5" y="7.5" width="2.5" height="6.5" fill="none" stroke="#9a9a9a" stroke-width="0.8"/><path d="M8 13.5 C11 13.5 13 12 13 8.5 M11 10 L13 8 L15 10 M9.5 11.8 L8 13.5 L9.5 15" fill="none" stroke="#2f7fc1" stroke-width="1.2"/></svg>
<svg style="position:absolute;left:10px;top:254px;" width="18" height="17" viewBox="0 0 18 17"><path d="M9 0.5 L10.6 3.9 L14.2 4.2 L11.5 6.6 L12.3 10.1 L9 8.3 L5.7 10.1 L6.5 6.6 L3.8 4.2 L7.4 3.9Z" fill="#3d72b8"/><text x="9" y="16.6" font-size="7.5" font-weight="700" font-family="Liberation Sans" fill="#7a7a7a" text-anchor="middle">100</text></svg>
<svg style="position:absolute;left:11px;top:277px;" width="16" height="16" viewBox="0 0 16 16"><circle cx="8" cy="8" r="6.5" fill="none" stroke="#e8893a" stroke-width="2.4"/><path d="M1.5 8 A6.5 6.5 0 0 1 8 1.5" fill="none" stroke="#d3d3d3" stroke-width="2.4"/></svg>
<svg style="position:absolute;left:11px;top:300px;" width="16" height="16" viewBox="0 0 16 16"><defs><clipPath id="gc2"><circle cx="17" cy="17" r="12.8"/></clipPath></defs><g transform="scale(0.4706)"><circle cx="17" cy="17" r="16.5" fill="#1a8bb0"/><g clip-path="url(#gc2)" fill="#fff"><path d="M0 0 L15 0 L14.5 3 L9.3 9 L15.3 12 L18 14.3 L17.3 17 L14.7 18.5 L13.3 21 L12.7 26.5 L10.5 25 L9.3 21 L7.3 17.7 L6.7 13 L4.5 11.3 L0 11 Z"/><path d="M20.5 3.5 L25 6.8 L22.5 10.3 L23.3 13 L26.7 16.3 L27.3 24 L34 24 L34 0 L20.5 0 Z"/><path d="M12.5 31 Q18 26.8 25 28.2 L25 34 L12.5 34 Z"/></g></g></svg>
<svg style="position:absolute;left:18px;top:321px;" width="4" height="6" viewBox="0 0 4 6"><path d="M0 0 L4 3 L0 6Z" fill="#111"/></svg>
<svg style="position:absolute;left:12px;top:334px;" width="15" height="15" viewBox="0 0 15 15"><rect x="0.5" y="0.5" width="14" height="14" fill="#fff" stroke="#c0c0c0" stroke-width="1"/><circle cx="11" cy="3.5" r="1.8" fill="#e6bf6a"/><path d="M1 14 V9 C2 8 3 7.5 4 8 L6 9.5 C7 8.5 8 8.5 9 9.5 L11 11 C12 10.5 13 10.5 14 11.5 V14Z" fill="#3d7cc9"/><path d="M4 8 L10 14" stroke="#fff" stroke-width="0.7"/></svg>
<svg style="position:absolute;left:12px;top:357px;" width="15" height="13" viewBox="0 0 15 13"><rect x="0.5" y="0.5" width="14" height="12" fill="#fff" stroke="#707070" stroke-width="1"/><path d="M2.3 7 L3.8 2.5 L5.3 7 M2.8 5.5 H4.8" fill="none" stroke="#f04848" stroke-width="1"/><path d="M7 2.5 H13 M7 4.5 H13 M7 6.5 H13 M2.3 8.5 H13 M2.3 10.5 H13" stroke="#2f7fc1" stroke-width="0.8"/></svg>
<svg style="position:absolute;left:12px;top:380px;" width="14" height="14" viewBox="0 0 14 14"><rect x="0.5" y="0.5" width="13" height="13" fill="none" stroke="#555" stroke-width="1" stroke-dasharray="1.2 1"/></svg>
<svg style="position:absolute;left:10px;top:402px;" width="18" height="16" viewBox="0 0 18 16"><circle cx="11.5" cy="6" r="4.7" fill="none" stroke="#3d72b8" stroke-width="0.9"/><rect x="1.5" y="4.5" width="7.5" height="7.5" fill="#fff" stroke="#3d72b8" stroke-width="0.9"/><path d="M9.5 8 L13 11.5 L9.5 15 L6 11.5Z" fill="#fff" stroke="#3d72b8" stroke-width="0.9"/></svg>
<svg style="position:absolute;left:18px;top:423px;" width="4" height="6" viewBox="0 0 4 6"><path d="M0 0 L4 3 L0 6Z" fill="#111"/></svg>
<svg style="position:absolute;left:11px;top:436px;" width="16" height="14" viewBox="0 0 16 14"><path d="M0.5 0.5 H12 L7.5 5 V12 H5 V5Z" fill="#7a7a7a"/><path d="M2 1.5 L5.7 5.3 V11" fill="none" stroke="#fff" stroke-width="0.7"/><rect x="9.5" y="7.5" width="6" height="6" fill="#fff" stroke="#3d72b8" stroke-width="1.2"/></svg>
<svg style="position:absolute;left:18px;top:456px;" width="4" height="6" viewBox="0 0 4 6"><path d="M0 0 L4 3 L0 6Z" fill="#111"/></svg>
<div style="position:absolute;left:7px;top:466px;width:24px;height:1px;background:#c8c8c8"></div>
<svg style="position:absolute;left:11px;top:471px;" width="17" height="16" viewBox="0 0 17 16"><path d="M2.5 3 L14.5 15" stroke="#666" stroke-width="2.2"/><path d="M0.5 4.5 C0 2 2 -0.5 4.8 0.8 L3 2.6 L4.5 4.1 L6.3 2.3 C7.2 5 5 7 2.4 6.3Z" fill="#666"/><path d="M2 15 L12 5" stroke="#3d7cc9" stroke-width="2.4"/><path d="M8.5 2.3 C10 0.5 12.5 0.3 14 1.5 L16.8 4.6 L15.3 6.2 L13 4.6 L11.2 6.4 L8.6 4Z" fill="#3d7cc9"/></svg>
<svg style="position:absolute;left:601px;top:184px;" width="17" height="16" viewBox="0 0 17 16"><rect x="4.5" y="2.5" width="7" height="6" fill="#fff" stroke="#888" stroke-width="1"/><rect x="4" y="2" width="8" height="2" fill="#3d7cc9"/><rect x="7.5" y="6.5" width="8" height="8" fill="#fff" stroke="#888" stroke-width="1"/><rect x="7" y="6" width="9" height="2" fill="#3d7cc9"/><path d="M9.5 10.5h1 M12.5 10.5h1 M9.5 12.5h1 M12.5 12.5h1" stroke="#8fb0de" stroke-width="1"/><g stroke="#f0c060" stroke-width="1"><path d="M3.5 0 V7 M0 3.5 H7 M1 1 L6 6 M6 1 L1 6"/></g><circle cx="3.5" cy="3.5" r="1.6" fill="#fbe3a8"/></svg>
<svg style="position:absolute;left:624px;top:191px;" width="6" height="4" viewBox="0 0 6 4"><path d="M0 0 H6 L3 3.5Z" fill="#111"/></svg>
<svg style="position:absolute;left:640px;top:185px;" width="16" height="15" viewBox="0 0 16 15"><rect x="0.5" y="1" width="13" height="12.5" fill="none" stroke="#666" stroke-width="1"/><rect x="0" y="0.5" width="14" height="2" fill="#3d7cc9"/><path d="M3 13 L13.5 2.5" stroke="#3d7cc9" stroke-width="2.5"/><path d="M1.5 14.5 L2.3 11.8 L4.2 13.7Z" fill="#3d7cc9"/></svg>
<svg style="position:absolute;left:662px;top:184px;" width="17" height="16" viewBox="0 0 17 16"><path d="M2 15 C5 9.5 9 4.5 15.5 1.8 C15 2.8 10 6 4.5 15 Z" fill="#e05a3a"/><path d="M3 2 C3.5 1.5 4.5 1.6 5.2 2.3 C8.5 5.5 12.5 10 15.8 14.8 C11.5 11.5 7 7 3 2Z" fill="#e05a3a"/></svg>
<div style="position:absolute;left:684px;top:185px;width:1px;height:14px;background:#9a9a9a"></div>
<svg style="position:absolute;left:692px;top:186px;" width="12" height="11" viewBox="0 0 12 11"><path d="M6 0.5 L11.5 6 H8.5 V10.5 H3.5 V6 H0.5Z" fill="#3d7cc9"/></svg>
<svg style="position:absolute;left:716px;top:186px;" width="12" height="11" viewBox="0 0 12 11"><path d="M6 10.5 L11.5 5 H8.5 V0.5 H3.5 V5 H0.5Z" fill="#3d7cc9"/></svg>
<div style="position:absolute;left:735px;top:185px;width:1px;height:14px;background:#9a9a9a"></div>
<svg style="position:absolute;left:741px;top:184px;" width="15" height="15" viewBox="0 0 15 15"><circle cx="7.5" cy="7.5" r="4.5" fill="none" stroke="#a8a8a8" stroke-width="3"/><path d="M7.5 0.5 V3 M7.5 12 V14.5 M0.5 7.5 H3 M12 7.5 H14.5 M2.5 2.5 L4.3 4.3 M10.7 10.7 L12.5 12.5 M12.5 2.5 L10.7 4.3 M2.5 12.5 L4.3 10.7" stroke="#a8a8a8" stroke-width="2.4"/></svg>
<svg style="position:absolute;left:763px;top:191px;" width="6" height="4" viewBox="0 0 6 4"><path d="M0 0 H6 L3 3.5Z" fill="#111"/></svg>
<div style="position:absolute;left:608px;top:219px;width:1px;height:298px;background:repeating-linear-gradient(180deg,#7a7a7a 0 1px,transparent 1px 2px)"></div>
<svg style="position:absolute;left:604px;top:209px;" width="9" height="9" viewBox="0 0 9 9"><defs><linearGradient id="eg" x1="0" y1="0" x2="0" y2="1"><stop offset="0" stop-color="#fff"/><stop offset="1" stop-color="#d8d8d8"/></linearGradient></defs><rect x="0.5" y="0.5" width="8" height="8" rx="1.2" fill="url(#eg)" stroke="#8c8c8c" stroke-width="1"/><path d="M2 4.5 H7" stroke="#2b3f8f" stroke-width="1"/></svg>
<div style="position:absolute;left:614px;top:213px;width:6px;height:1px;background:repeating-linear-gradient(90deg,#7a7a7a 0 1px,transparent 1px 2px)"></div>
<svg style="position:absolute;left:621px;top:207px;" width="12" height="12" viewBox="0 0 12 12"><rect x="0.5" y="0.5" width="11" height="11" fill="#fff" stroke="#7a7a7a" stroke-width="1"/><rect x="0" y="0" width="12" height="2.5" fill="#4a7fc0"/><path d="M2.5 4.5h2 M5.5 4.5h2 M8.5 4.5h1.5 M2.5 6.5h2 M5.5 6.5h2 M8.5 6.5h1.5 M2.5 8.5h2 M5.5 8.5h2 M8.5 8.5h1.5" stroke="#9fbbe0" stroke-width="1"/></svg>
<div style="position:absolute;left:640.80px;top:206.80px;font-size:12px;line-height:1;white-space:nowrap;color:#1e1e1e;font-weight:400;letter-spacing:-0.150px;-webkit-text-stroke:0.2px #1e1e1e;transform:scaleX(0.9007);transform-origin:0.00px 50%;">Data Sources</div>
<div style="position:absolute;left:627px;top:220px;width:1px;height:4px;background:repeating-linear-gradient(180deg,#7a7a7a 0 1px,transparent 1px 2px)"></div>
<svg style="position:absolute;left:623px;top:225px;" width="9" height="9" viewBox="0 0 9 9"><defs><linearGradient id="eg" x1="0" y1="0" x2="0" y2="1"><stop offset="0" stop-color="#fff"/><stop offset="1" stop-color="#d8d8d8"/></linearGradient></defs><rect x="0.5" y="0.5" width="8" height="8" rx="1.2" fill="url(#eg)" stroke="#8c8c8c" stroke-width="1"/><path d="M2 4.5 H7" stroke="#2b3f8f" stroke-width="1"/></svg>
<div style="position:absolute;left:633px;top:229px;width:6px;height:1px;background:repeating-linear-gradient(90deg,#7a7a7a 0 1px,transparent 1px 2px)"></div>
<svg style="position:absolute;left:640px;top:222px;" width="12" height="13" viewBox="0 0 12 13"><path d="M0 2.5 C0 0.3 12 0.3 12 2.5 V10.5 C12 12.8 0 12.8 0 10.5Z" fill="#ebc67a"/><path d="M0.5 3 C1.5 5 10.5 5 11.5 3" fill="none" stroke="#f6e2b5" stroke-width="1"/></svg>
<div style="position:absolute;left:658.00px;top:222.80px;font-size:12px;line-height:1;white-space:nowrap;color:#1e1e1e;font-weight:400;letter-spacing:-0.150px;-webkit-text-stroke:0.2px #1e1e1e;transform:scaleX(0.9004);transform-origin:0.00px 50%;">analytics [Excel]</div>
<div style="position:absolute;left:646px;top:236px;width:1px;height:4px;background:repeating-linear-gradient(180deg,#7a7a7a 0 1px,transparent 1px 2px)"></div>
<svg style="position:absolute;left:642px;top:241px;" width="9" height="9" viewBox="0 0 9 9"><defs><linearGradient id="eg" x1="0" y1="0" x2="0" y2="1"><stop offset="0" stop-color="#fff"/><stop offset="1" stop-color="#d8d8d8"/></linearGradient></defs><rect x="0.5" y="0.5" width="8" height="8" rx="1.2" fill="url(#eg)" stroke="#8c8c8c" stroke-width="1"/><path d="M2 4.5 H7" stroke="#2b3f8f" stroke-width="1"/></svg>
<div style="position:absolute;left:652px;top:245px;width:6px;height:1px;background:repeating-linear-gradient(90deg,#7a7a7a 0 1px,transparent 1px 2px)"></div>
<svg style="position:absolute;left:659px;top:239px;" width="12" height="12" viewBox="0 0 12 12"><rect x="0.5" y="0.5" width="11" height="11" fill="#fff" stroke="#7a7a7a" stroke-width="1"/><rect x="0" y="0" width="12" height="2.5" fill="#4a7fc0"/><path d="M2.5 4.5h2 M5.5 4.5h2 M8.5 4.5h1.5 M2.5 6.5h2 M5.5 6.5h2 M8.5 6.5h1.5 M2.5 8.5h2 M5.5 8.5h2 M8.5 8.5h1.5" stroke="#9fbbe0" stroke-width="1"/></svg>
<div style="position:absolute;left:678.00px;top:238.80px;font-size:12px;line-height:1;white-space:nowrap;color:#1e1e1e;font-weight:400;letter-spacing:-0.150px;-webkit-text-stroke:0.2px #1e1e1e;transform:scaleX(0.8840);transform-origin:0.00px 50%;">SiteStatistics</div>
<div style="position:absolute;left:665px;top:251px;width:1px;height:203px;background:repeating-linear-gradient(180deg,#7a7a7a 0 1px,transparent 1px 2px)"></div>
<div style="position:absolute;left:666px;top:261px;width:11px;height:1px;background:repeating-linear-gradient(90deg,#7a7a7a 0 1px,transparent 1px 2px)"></div>
<svg style="position:absolute;left:677px;top:256px;" width="15" height="9" viewBox="0 0 15 9"><rect x="0.5" y="0.5" width="14" height="8" fill="#fff" stroke="#7d90b5" stroke-width="1"/><rect x="4.8" y="5.4" width="1.5" height="1.5" fill="#1f2a4a"/><path d="M8 2.1 H11.8 M8.6 2.1 V7 M8 4.5 H11.3 M8 6.9 H11.8" stroke="#1f2a4a" stroke-width="1.1" fill="none"/></svg>
<div style="position:absolute;left:697.00px;top:254.80px;font-size:12px;line-height:1;white-space:nowrap;color:#1e1e1e;font-weight:400;letter-spacing:-0.150px;-webkit-text-stroke:0.2px #1e1e1e;transform:scaleX(0.9277);transform-origin:0.00px 50%;">WeekID</div>
<div style="position:absolute;left:666px;top:277px;width:11px;height:1px;background:repeating-linear-gradient(90deg,#7a7a7a 0 1px,transparent 1px 2px)"></div>
<svg style="position:absolute;left:677px;top:272px;" width="15" height="9" viewBox="0 0 15 9"><rect x="0.5" y="0.5" width="14" height="8" fill="#fff" stroke="#7d90b5" stroke-width="1"/><text x="7.6" y="7.3" font-size="7.6" font-weight="700" font-family="Liberation Sans" fill="#1f2a4a" text-anchor="middle" letter-spacing="-0.4">abc</text></svg>
<div style="position:absolute;left:697.00px;top:270.80px;font-size:12px;line-height:1;white-space:nowrap;color:#1e1e1e;font-weight:400;letter-spacing:-0.150px;-webkit-text-stroke:0.2px #1e1e1e;transform:scaleX(0.9353);transform-origin:0.00px 50%;">Week</div>
<div style="position:absolute;left:666px;top:293px;width:11px;height:1px;background:repeating-linear-gradient(90deg,#7a7a7a 0 1px,transparent 1px 2px)"></div>
<svg style="position:absolute;left:677px;top:288px;" width="15" height="9" viewBox="0 0 15 9"><rect x="0.5" y="0.5" width="14" height="8" fill="#fff" stroke="#7d90b5" stroke-width="1"/><rect x="4.8" y="5.4" width="1.5" height="1.5" fill="#1f2a4a"/><path d="M8 2.1 H11.8 M8.6 2.1 V7 M8 4.5 H11.3 M8 6.9 H11.8" stroke="#1f2a4a" stroke-width="1.1" fill="none"/></svg>
<div style="position:absolute;left:697.00px;top:286.80px;font-size:12px;line-height:1;white-space:nowrap;color:#1e1e1e;font-weight:400;letter-spacing:-0.150px;-webkit-text-stroke:0.2px #1e1e1e;transform:scaleX(0.8785);transform-origin:0.00px 50%;">Users</div>
<div style="position:absolute;left:666px;top:309px;width:11px;height:1px;background:repeating-linear-gradient(90deg,#7a7a7a 0 1px,transparent 1px 2px)"></div>
<svg style="position:absolute;left:677px;top:304px;" width="15" height="9" viewBox="0 0 15 9"><rect x="0.5" y="0.5" width="14" height="8" fill="#fff" stroke="#7d90b5" stroke-width="1"/><rect x="4.8" y="5.4" width="1.5" height="1.5" fill="#1f2a4a"/><path d="M8 2.1 H11.8 M8.6 2.1 V7 M8 4.5 H11.3 M8 6.9 H11.8" stroke="#1f2a4a" stroke-width="1.1" fill="none"/></svg>
<div style="position:absolute;left:697.00px;top:302.80px;font-size:12px;line-height:1;white-space:nowrap;color:#1e1e1e;font-weight:400;letter-spacing:-0.150px;-webkit-text-stroke:0.2px #1e1e1e;transform:scaleX(0.8606);transform-origin:0.00px 50%;">Sessions</div>
<div style="position:absolute;left:666px;top:325px;width:11px;height:1px;background:repeating-linear-gradient(90deg,#7a7a7a 0 1px,transparent 1px 2px)"></div>
<svg style="position:absolute;left:677px;top:320px;" width="15" height="9" viewBox="0 0 15 9"><rect x="0.5" y="0.5" width="14" height="8" fill="#fff" stroke="#7d90b5" stroke-width="1"/><rect x="4.8" y="5.4" width="1.5" height="1.5" fill="#1f2a4a"/><path d="M8 2.1 H11.8 M8.6 2.1 V7 M8 4.5 H11.3 M8 6.9 H11.8" stroke="#1f2a4a" stroke-width="1.1" fill="none"/></svg>
<div style="position:absolute;left:697.00px;top:318.80px;font-size:12px;line-height:1;white-space:nowrap;color:#1e1e1e;font-weight:400;letter-spacing:-0.150px;-webkit-text-stroke:0.2px #1e1e1e;transform:scaleX(0.8810);transform-origin:0.00px 50%;">Returning Visitors</div>
<div style="position:absolute;left:666px;top:341px;width:11px;height:1px;background:repeating-linear-gradient(90deg,#7a7a7a 0 1px,transparent 1px 2px)"></div>
<svg style="position:absolute;left:677px;top:336px;" width="15" height="9" viewBox="0 0 15 9"><rect x="0.5" y="0.5" width="14" height="8" fill="#fff" stroke="#7d90b5" stroke-width="1"/><rect x="4.8" y="5.4" width="1.5" height="1.5" fill="#1f2a4a"/><path d="M8 2.1 H11.8 M8.6 2.1 V7 M8 4.5 H11.3 M8 6.9 H11.8" stroke="#1f2a4a" stroke-width="1.1" fill="none"/></svg>
<div style="position:absolute;left:697.00px;top:334.80px;font-size:12px;line-height:1;white-space:nowrap;color:#1e1e1e;font-weight:400;letter-spacing:-0.150px;-webkit-text-stroke:0.2px #1e1e1e;transform:scaleX(0.8769);transform-origin:0.00px 50%;">Pageview</div>
<div style="position:absolute;left:666px;top:357px;width:11px;height:1px;background:repeating-linear-gradient(90deg,#7a7a7a 0 1px,transparent 1px 2px)"></div>
<svg style="position:absolute;left:677px;top:352px;" width="15" height="9" viewBox="0 0 15 9"><rect x="0.5" y="0.5" width="14" height="8" fill="#fff" stroke="#7d90b5" stroke-width="1"/><rect x="4.8" y="5.4" width="1.5" height="1.5" fill="#1f2a4a"/><path d="M8 2.1 H11.8 M8.6 2.1 V7 M8 4.5 H11.3 M8 6.9 H11.8" stroke="#1f2a4a" stroke-width="1.1" fill="none"/></svg>
<div style="position:absolute;left:697.00px;top:350.80px;font-size:12px;line-height:1;white-space:nowrap;color:#1e1e1e;font-weight:400;letter-spacing:-0.150px;-webkit-text-stroke:0.2px #1e1e1e;transform:scaleX(0.9220);transform-origin:0.00px 50%;">Page / Session</div>
<div style="position:absolute;left:666px;top:373px;width:11px;height:1px;background:repeating-linear-gradient(90deg,#7a7a7a 0 1px,transparent 1px 2px)"></div>
<svg style="position:absolute;left:677px;top:368px;" width="15" height="9" viewBox="0 0 15 9"><rect x="0.5" y="0.5" width="14" height="8" fill="#fff" stroke="#7d90b5" stroke-width="1"/><rect x="4.8" y="5.4" width="1.5" height="1.5" fill="#1f2a4a"/><path d="M8 2.1 H11.8 M8.6 2.1 V7 M8 4.5 H11.3 M8 6.9 H11.8" stroke="#1f2a4a" stroke-width="1.1" fill="none"/></svg>
<div style="position:absolute;left:697.00px;top:366.80px;font-size:12px;line-height:1;white-space:nowrap;color:#1e1e1e;font-weight:400;letter-spacing:-0.150px;-webkit-text-stroke:0.2px #1e1e1e;transform:scaleX(0.8925);transform-origin:0.00px 50%;">Number of Sessions per User</div>
<div style="position:absolute;left:666px;top:389px;width:11px;height:1px;background:repeating-linear-gradient(90deg,#7a7a7a 0 1px,transparent 1px 2px)"></div>
<div style="position:absolute;left:695px;top:381px;width:55px;height:16px;background:#efefef"></div>
<svg style="position:absolute;left:677px;top:384px;" width="15" height="9" viewBox="0 0 15 9"><rect x="0.5" y="0.5" width="14" height="8" fill="#fff" stroke="#7d90b5" stroke-width="1"/><rect x="4.8" y="5.4" width="1.5" height="1.5" fill="#1f2a4a"/><path d="M8 2.1 H11.8 M8.6 2.1 V7 M8 4.5 H11.3 M8 6.9 H11.8" stroke="#1f2a4a" stroke-width="1.1" fill="none"/></svg>
<div style="position:absolute;left:697.00px;top:382.80px;font-size:12px;line-height:1;white-space:nowrap;color:#1e1e1e;font-weight:400;letter-spacing:-0.150px;-webkit-text-stroke:0.2px #1e1e1e;transform:scaleX(0.9047);transform-origin:0.00px 50%;">New Users</div>
<div style="position:absolute;left:666px;top:405px;width:11px;height:1px;background:repeating-linear-gradient(90deg,#7a7a7a 0 1px,transparent 1px 2px)"></div>
<svg style="position:absolute;left:677px;top:400px;" width="15" height="9" viewBox="0 0 15 9"><rect x="0.5" y="0.5" width="14" height="8" fill="#fff" stroke="#7d90b5" stroke-width="1"/><text x="7.6" y="7.3" font-size="7.6" font-weight="700" font-family="Liberation Sans" fill="#1f2a4a" text-anchor="middle" letter-spacing="-0.4">abc</text></svg>
<div style="position:absolute;left:697.00px;top:398.80px;font-size:12px;line-height:1;white-space:nowrap;color:#1e1e1e;font-weight:400;letter-spacing:-0.150px;-webkit-text-stroke:0.2px #1e1e1e;transform:scaleX(0.9041);transform-origin:0.00px 50%;">Month</div>
<div style="position:absolute;left:666px;top:421px;width:11px;height:1px;background:repeating-linear-gradient(90deg,#7a7a7a 0 1px,transparent 1px 2px)"></div>
<svg style="position:absolute;left:677px;top:416px;" width="15" height="9" viewBox="0 0 15 9"><rect x="0.5" y="0.5" width="14" height="8" fill="#fff" stroke="#7d90b5" stroke-width="1"/><circle cx="7.5" cy="4.5" r="3.6" fill="none" stroke="#1f2a4a" stroke-width="1.2"/><path d="M7.5 2.3 V4.8 H9.5" fill="none" stroke="#1f2a4a" stroke-width="1"/></svg>
<div style="position:absolute;left:697.00px;top:414.80px;font-size:12px;line-height:1;white-space:nowrap;color:#1e1e1e;font-weight:400;letter-spacing:-0.150px;-webkit-text-stroke:0.2px #1e1e1e;transform:scaleX(0.8722);transform-origin:0.00px 50%;">Date</div>
<div style="position:absolute;left:666px;top:437px;width:11px;height:1px;background:repeating-linear-gradient(90deg,#7a7a7a 0 1px,transparent 1px 2px)"></div>
<svg style="position:absolute;left:677px;top:432px;" width="15" height="9" viewBox="0 0 15 9"><rect x="0.5" y="0.5" width="14" height="8" fill="#fff" stroke="#7d90b5" stroke-width="1"/><rect x="4.8" y="5.4" width="1.5" height="1.5" fill="#1f2a4a"/><path d="M8 2.1 H11.8 M8.6 2.1 V7 M8 4.5 H11.3 M8 6.9 H11.8" stroke="#1f2a4a" stroke-width="1.1" fill="none"/></svg>
<div style="position:absolute;left:697.00px;top:430.80px;font-size:12px;line-height:1;white-space:nowrap;color:#1e1e1e;font-weight:400;letter-spacing:-0.150px;-webkit-text-stroke:0.2px #1e1e1e;transform:scaleX(0.9090);transform-origin:0.00px 50%;">Bounce Rate</div>
<div style="position:absolute;left:666px;top:453px;width:11px;height:1px;background:repeating-linear-gradient(90deg,#7a7a7a 0 1px,transparent 1px 2px)"></div>
<svg style="position:absolute;left:677px;top:448px;" width="15" height="9" viewBox="0 0 15 9"><rect x="0.5" y="0.5" width="14" height="8" fill="#fff" stroke="#7d90b5" stroke-width="1"/><rect x="4.8" y="5.4" width="1.5" height="1.5" fill="#1f2a4a"/><path d="M8 2.1 H11.8 M8.6 2.1 V7 M8 4.5 H11.3 M8 6.9 H11.8" stroke="#1f2a4a" stroke-width="1.1" fill="none"/></svg>
<div style="position:absolute;left:697.00px;top:446.80px;font-size:12px;line-height:1;white-space:nowrap;color:#1e1e1e;font-weight:400;letter-spacing:-0.150px;-webkit-text-stroke:0.2px #1e1e1e;transform:scaleX(0.9056);transform-origin:0.00px 50%;">Avg. Session Duration</div>
<div style="position:absolute;left:609px;top:469px;width:11px;height:1px;background:repeating-linear-gradient(90deg,#7a7a7a 0 1px,transparent 1px 2px)"></div>
<svg style="position:absolute;left:620px;top:464px;" width="15" height="9" viewBox="0 0 15 9"><rect x="0.5" y="0.5" width="14" height="8" fill="#fff" stroke="#7d90b5" stroke-width="1"/><rect x="0" y="0" width="1.6" height="9" fill="#3d7cc9"/><text x="8" y="7.4" font-size="6.3" font-weight="700" font-family="Liberation Mono" fill="#1f2a4a" text-anchor="middle" letter-spacing="-0.5">VAR</text></svg>
<div style="position:absolute;left:640.00px;top:462.80px;font-size:12px;line-height:1;white-space:nowrap;color:#1e1e1e;font-weight:400;letter-spacing:-0.150px;-webkit-text-stroke:0.2px #1e1e1e;transform:scaleX(0.8762);transform-origin:0.00px 50%;">Variables</div>
<svg style="position:absolute;left:604px;top:481px;" width="9" height="9" viewBox="0 0 9 9"><defs><linearGradient id="eg" x1="0" y1="0" x2="0" y2="1"><stop offset="0" stop-color="#fff"/><stop offset="1" stop-color="#d8d8d8"/></linearGradient></defs><rect x="0.5" y="0.5" width="8" height="8" rx="1.2" fill="url(#eg)" stroke="#8c8c8c" stroke-width="1"/><path d="M2 4.5 H7" stroke="#2b3f8f" stroke-width="1"/><path d="M4.5 2 V7" stroke="#2b3f8f" stroke-width="1"/></svg>
<div style="position:absolute;left:614px;top:485px;width:6px;height:1px;background:repeating-linear-gradient(90deg,#7a7a7a 0 1px,transparent 1px 2px)"></div>
<div style="position:absolute;left:640.00px;top:478.80px;font-size:12px;line-height:1;white-space:nowrap;color:#1e1e1e;font-weight:400;letter-spacing:-0.150px;-webkit-text-stroke:0.2px #1e1e1e;transform:scaleX(0.8866);transform-origin:0.00px 50%;">System Variables</div>
<svg style="position:absolute;left:604px;top:497px;" width="9" height="9" viewBox="0 0 9 9"><defs><linearGradient id="eg" x1="0" y1="0" x2="0" y2="1"><stop offset="0" stop-color="#fff"/><stop offset="1" stop-color="#d8d8d8"/></linearGradient></defs><rect x="0.5" y="0.5" width="8" height="8" rx="1.2" fill="url(#eg)" stroke="#8c8c8c" stroke-width="1"/><path d="M2 4.5 H7" stroke="#2b3f8f" stroke-width="1"/><path d="M4.5 2 V7" stroke="#2b3f8f" stroke-width="1"/></svg>
<div style="position:absolute;left:614px;top:501px;width:6px;height:1px;background:repeating-linear-gradient(90deg,#7a7a7a 0 1px,transparent 1px 2px)"></div>
<div style="position:absolute;left:640.00px;top:494.80px;font-size:12px;line-height:1;white-space:nowrap;color:#1e1e1e;font-weight:400;letter-spacing:-0.150px;-webkit-text-stroke:0.2px #1e1e1e;transform:scaleX(0.8854);transform-origin:0.00px 50%;">Functions</div>
<svg style="position:absolute;left:604px;top:513px;" width="9" height="9" viewBox="0 0 9 9"><defs><linearGradient id="eg" x1="0" y1="0" x2="0" y2="1"><stop offset="0" stop-color="#fff"/><stop offset="1" stop-color="#d8d8d8"/></linearGradient></defs><rect x="0.5" y="0.5" width="8" height="8" rx="1.2" fill="url(#eg)" stroke="#8c8c8c" stroke-width="1"/><path d="M2 4.5 H7" stroke="#2b3f8f" stroke-width="1"/><path d="M4.5 2 V7" stroke="#2b3f8f" stroke-width="1"/></svg>
<div style="position:absolute;left:614px;top:517px;width:6px;height:1px;background:repeating-linear-gradient(90deg,#7a7a7a 0 1px,transparent 1px 2px)"></div>
<div style="position:absolute;left:640.00px;top:510.80px;font-size:12px;line-height:1;white-space:nowrap;color:#1e1e1e;font-weight:400;letter-spacing:-0.150px;-webkit-text-stroke:0.2px #1e1e1e;transform:scaleX(0.8904);transform-origin:0.00px 50%;">Resources</div>
<svg style="position:absolute;left:620px;top:480px;" width="15" height="9" viewBox="0 0 15 9"><rect x="0.5" y="0.5" width="14" height="8" fill="#fff" stroke="#7d90b5" stroke-width="1"/><text x="7.5" y="7.4" font-size="6.5" font-weight="700" font-family="Liberation Mono" fill="#1f2a4a" text-anchor="middle" letter-spacing="-0.3">Σ#</text></svg>
<svg style="position:absolute;left:619px;top:493px;" width="18" height="16" viewBox="0 0 18 16"><text x="1.5" y="12.3" font-size="15" font-style="italic" font-family="Liberation Serif" fill="#444" letter-spacing="-0.5">fx</text></svg>
<svg style="position:absolute;left:619px;top:509px;" width="16" height="16" viewBox="0 0 16 16"><path d="M6.5 1.5 H12 L14.5 4 V14.5 H6.5Z" fill="#fff" stroke="#777" stroke-width="1"/><path d="M12 1.5 V4 H14.5" fill="none" stroke="#777" stroke-width="1"/><path d="M1.5 4.5 H9.5 V15.5 H1.5Z" fill="#fff" stroke="#777" stroke-width="1"/><path d="M3.5 8.5h4 M3.5 10.5h4 M3.5 12.5h4" stroke="#4a7fc0" stroke-width="0.8"/></svg>
<svg style="position:absolute;left:601px;top:545px;" width="17" height="17" viewBox="0 0 17 17"><rect x="1.5" y="6.5" width="13" height="10" fill="#fff" stroke="#888" stroke-width="1"/><path d="M3.5 10h4 M9 10h4 M3.5 12.5h4 M9 12.5h4 M3.5 15h4 M9 15h4" stroke="#9fbbe0" stroke-width="1"/><path d="M4 8.5 C4.5 4 8 1 12.5 1 L14.5 3.5 C12 4.5 10 6.5 9 8.5Z" fill="#e8c060" stroke="#b89040" stroke-width="0.5"/><rect x="13.5" y="0.5" width="3" height="4.5" fill="#4caf50"/></svg>
<div style="position:absolute;left:625.00px;top:547.80px;font-size:12px;line-height:1;white-space:nowrap;color:#1e1e1e;font-weight:400;letter-spacing:-0.150px;-webkit-text-stroke:0.2px #1e1e1e;transform:scaleX(0.8624);transform-origin:0.00px 50%;">Properties</div>
<div style="position:absolute;left:680px;top:543px;width:1px;height:20px;background:#c8c8c8"></div>
<div style="position:absolute;left:680px;top:563px;width:82px;height:2px;background:#2b4e9a"></div>
<svg style="position:absolute;left:685px;top:546px;" width="16" height="15" viewBox="0 0 16 15"><rect x="5.5" y="1.5" width="9" height="8" fill="#fff" stroke="#777" stroke-width="1"/><rect x="5" y="1" width="10" height="3" fill="#3d7cc9"/><path d="M12 6h1 M12 8h1" stroke="#8fb0de"/><rect x="0.5" y="5.5" width="9" height="8" fill="#fff" stroke="#777" stroke-width="1"/><rect x="0" y="5" width="10" height="3" fill="#3d7cc9"/><path d="M2 10.5h1 M6 10.5h1 M2 12.5h1 M6 12.5h1" stroke="#8fb0de"/></svg>
<div style="position:absolute;left:707.20px;top:547.80px;font-size:12px;line-height:1;white-space:nowrap;color:#3a5aa8;font-weight:400;letter-spacing:-0.150px;-webkit-text-stroke:0.2px #3a5aa8;transform:scaleX(0.8808);transform-origin:0.00px 50%;">Dictionary</div>
<div style="position:absolute;left:761px;top:543px;width:1px;height:20px;background:#c8c8c8"></div>
<svg style="position:absolute;left:766px;top:546px;" width="16" height="16" viewBox="0 0 16 16"><rect x="0.5" y="0.5" width="15" height="15" fill="#fff" stroke="#666" stroke-width="1"/><path d="M4 3.5 H8 M5 3.5 V12 M5 7.5 H8 M5 11.5 H8 M9 7.5 H12 M9 11.5 H12" stroke="#3d72b8" stroke-width="1"/></svg>
<div style="position:absolute;left:789.30px;top:547.80px;font-size:12px;line-height:1;white-space:nowrap;color:#1e1e1e;font-weight:400;letter-spacing:-0.150px;-webkit-text-stroke:0.2px #1e1e1e;transform:scaleX(0.8973);transform-origin:0.00px 50%;">Report Tree</div>
<svg style="position:absolute;left:539px;top:576px;" width="16" height="15" viewBox="0 0 16 15"><rect x="0.6" y="0.6" width="14.8" height="13.8" fill="none" stroke="#fff" stroke-width="1.2"/><path d="M5 4.5 H11 M5 7.5 H11 M5 10.5 H11" stroke="#fff" stroke-width="1"/><path d="M4 5 L1.5 7.5 L4 10Z M12 5 L14.5 7.5 L12 10Z" fill="#fff"/></svg>
<svg style="position:absolute;left:575px;top:576px;" width="16" height="15" viewBox="0 0 16 15"><rect x="0.6" y="0.6" width="14.8" height="13.8" fill="none" stroke="#fff" stroke-width="1.2"/><path d="M3 6.5 H13 M3 8.5 H13" stroke="#fff" stroke-width="1"/><path d="M5 5 L8 2 L11 5Z M5 10 L8 13 L11 10Z" fill="#fff"/></svg>
<svg style="position:absolute;left:611px;top:576px;" width="16" height="15" viewBox="0 0 16 15"><rect x="0.6" y="0.6" width="14.8" height="13.8" fill="none" stroke="#fff" stroke-width="1.2"/><rect x="4.5" y="2.5" width="7" height="10" fill="none" stroke="#fff" stroke-width="1"/><path d="M6 5.5 H10 M6 7.5 H10 M6 9.5 H10" stroke="#fff" stroke-width="1"/></svg>
<svg style="position:absolute;left:647px;top:576px;" width="16" height="15" viewBox="0 0 16 15"><rect x="0.6" y="0.6" width="14.8" height="13.8" fill="none" stroke="#fff" stroke-width="1.2"/><path d="M3.6 5.2 L4.6 4.5 V10.6" fill="none" stroke="#fff" stroke-width="1.1"/><rect x="7" y="5" width="1.8" height="5.2" fill="none" stroke="#fff" stroke-width="1"/><rect x="11" y="5" width="1.8" height="5.2" fill="none" stroke="#fff" stroke-width="1"/></svg>
<div style="position:absolute;left:740px;top:583px;width:9px;height:3px;background:#fff"></div>
<div style="position:absolute;left:752px;top:584px;width:96px;height:1px;background:#7d97c4"></div>
<div style="position:absolute;left:801px;top:580px;width:1px;height:8px;background:#7d97c4"></div>
<svg style="position:absolute;left:769px;top:577px;" width="10" height="13" viewBox="0 0 10 13"><path d="M0.5 0.5 H9.5 V8.5 L5 12.5 L0.5 8.5Z" fill="#fff"/></svg>
<svg style="position:absolute;left:851px;top:579px;" width="10" height="10" viewBox="0 0 10 10"><path d="M0.5 5 H9.5 M5 0.5 V9.5" stroke="#fff" stroke-width="2.4"/></svg>
<div style="position:absolute;left:890px;top:586px;width:2px;height:2px;background:#a8a8b0"></div>
<div style="position:absolute;left:891px;top:587px;width:2px;height:2px;background:#fff"></div>
<div style="position:absolute;left:886px;top:590px;width:2px;height:2px;background:#a8a8b0"></div>
<div style="position:absolute;left:887px;top:591px;width:2px;height:2px;background:#fff"></div>
<div style="position:absolute;left:890px;top:590px;width:2px;height:2px;background:#a8a8b0"></div>
<div style="position:absolute;left:891px;top:591px;width:2px;height:2px;background:#fff"></div>
<div style="position:absolute;left:882px;top:594px;width:2px;height:2px;background:#a8a8b0"></div>
<div style="position:absolute;left:883px;top:595px;width:2px;height:2px;background:#fff"></div>
<div style="position:absolute;left:886px;top:594px;width:2px;height:2px;background:#a8a8b0"></div>
<div style="position:absolute;left:887px;top:595px;width:2px;height:2px;background:#fff"></div>
<div style="position:absolute;left:890px;top:594px;width:2px;height:2px;background:#a8a8b0"></div>
<div style="position:absolute;left:891px;top:595px;width:2px;height:2px;background:#fff"></div>
<svg style="position:absolute;left:575px;top:325px;" width="63" height="42" viewBox="0 0 63 42"><path d="M1.2 21 L29.7 1.2 V11 H61 V30.5 H29.7 V40.5Z" fill="#f0737b"/></svg>
</div></body></html>
